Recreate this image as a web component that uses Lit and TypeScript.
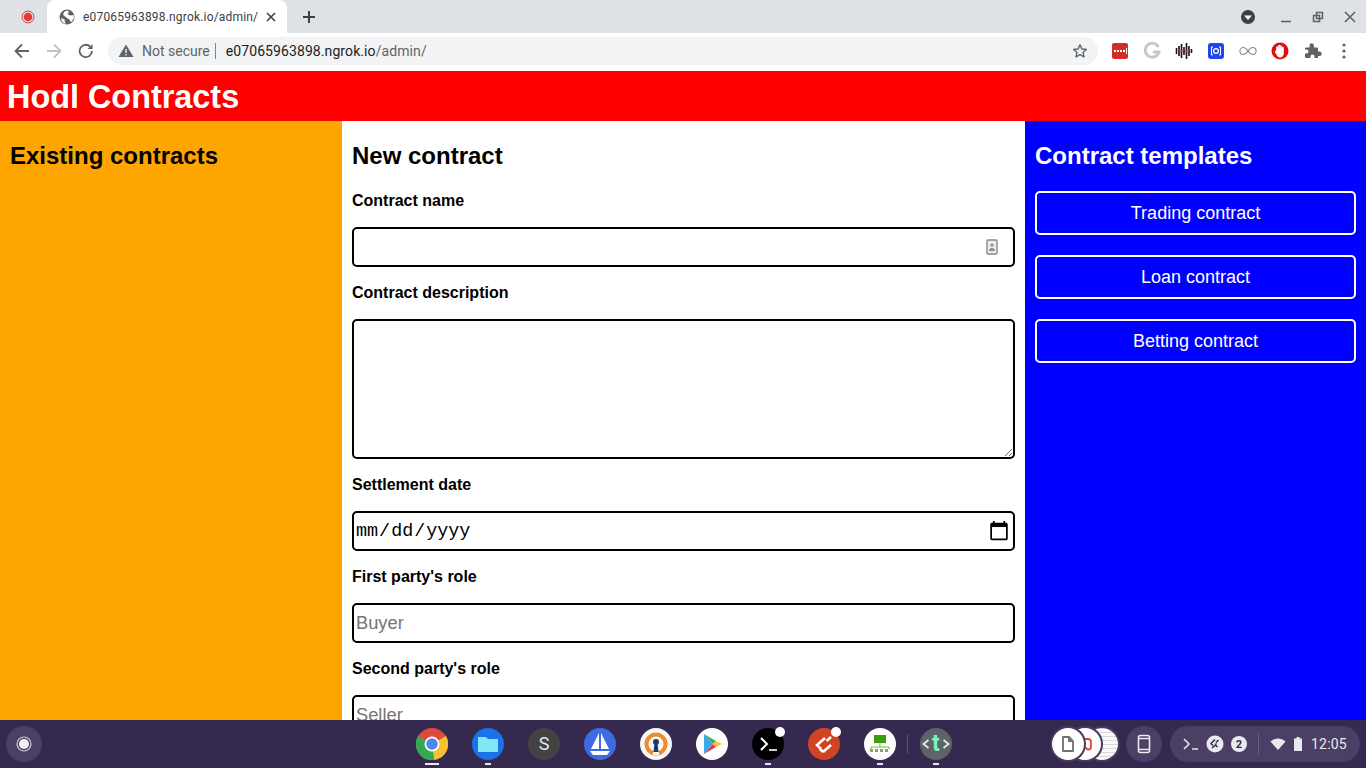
import { LitElement, html, css, svg } from "lit";
import { customElement } from "lit/decorators.js";

const ext = [
  svg`<rect x="2" y="2" width="16" height="16" rx="2" fill="#d32d27"/><path d="M4 9h2v2H4zM7 9h2v2H7zM10 9h2v2h-2zM13 9h2v2h-2z" fill="#fff"/><rect x="16" y="7" width="1" height="6" fill="#fff"/>`,
  svg`<path d="M16.500 6A7 7 0 1 0 17 11H11" fill="none" stroke="#c6c6c6" stroke-width="2.800"/>`,
  svg`<path d="M2.500 7v6M5 5v10M7.500 3v14M10 6v8M12.500 2v16M15 5v10M17.500 8v4" stroke="#111" stroke-width="1.600"/><path d="M5 8v4M7.500 8v4M12.500 8v4" stroke="#8a2a2a" stroke-width="1.600"/>`,
  svg`<rect x="2" y="2" width="16" height="16" rx="3" fill="#1f45f0"/><circle cx="10" cy="10" r="2.400" fill="none" stroke="#fff" stroke-width="1.200"/><path d="M7 6H5.500v8H7M13 6h1.500v8H13" fill="none" stroke="#fff"/>`,
  svg`<path d="M10 10c-2-3-3.200-3.500-4.600-3.500a3.500 3.500 0 0 0 0 7C6.800 13.500 8 13 10 10c2-3 3.200-3.500 4.600-3.500a3.500 3.500 0 0 1 0 7C13.200 13.500 12 13 10 10z" fill="none" stroke="#8a8a8a" stroke-width="1.100"/>`,
  svg`<circle cx="10" cy="10" r="8.500" fill="#e00d0d"/><path d="M6.200 10.500V6a1 1 0 0 1 1.900 0V4.500a1 1 0 0 1 1.900 0V5a1 1 0 0 1 1.900 0v1.500a1 1 0 0 1 1.900 0v6c0 2.300-1.400 4-3.500 4-1.700 0-2.700-.9-3.500-2.300l-1.900-3.200c-.5-1 .9-1.600 1.500-.9z" fill="#fff"/>`,
  svg`<path d="M3 8.500a1 1 0 0 1 1-1h3.500V5.500a2.200 2.200 0 0 1 4.400 0v2H15a1 1 0 0 1 1 1v3h1.500a2.200 2.200 0 0 1 0 4.400H16V18H12.500v-1.500a2 2 0 0 0-4 0V18H4a1 1 0 0 1-1-1v-3.500h1.500a2 2 0 0 0 0-4H3z" fill="#5f6368" transform="translate(0 -1)"/>`,
  svg`<circle cx="10" cy="4" r="1.600" fill="#5f6368"/><circle cx="10" cy="10" r="1.600" fill="#5f6368"/><circle cx="10" cy="16" r="1.600" fill="#5f6368"/>`,
];

const apps = [
  { dot: false, bar: 14, icon: svg`<circle cx="16" cy="16" r="16" fill="#e04a3a"/><path d="M16 16 30 8a16 16 0 0 1-12 24z" fill="#fbc02d"/><path d="M16 16 18 32A16 16 0 0 1 2 8z" fill="#34a853"/><circle cx="16" cy="16" r="7.500" fill="#fff"/><circle cx="16" cy="16" r="5.800" fill="#4f86ec"/>` },
  { dot: false, bar: 6, icon: svg`<circle cx="16" cy="16" r="16" fill="#1a73e8"/><path d="M6 9h8l2 2h10v13H6z" fill="#80e6f5"/>` },
  { dot: false, bar: 0, icon: svg`<circle cx="16" cy="16" r="16" fill="#424242"/><text x="16" y="22" text-anchor="middle" font-size="18" fill="#e6e6e6" font-family="Roboto, sans-serif">S</text>` },
  { dot: false, bar: 0, icon: svg`<circle cx="16" cy="16" r="16" fill="#3d6ce0"/><path d="M15 5v16H7zM17 5l8 16h-8zM6 23h20l-3 4H9z" fill="#fff"/>` },
  { dot: false, bar: 0, icon: svg`<circle cx="16" cy="16" r="16" fill="#f8f8f8"/><circle cx="16" cy="16" r="9.500" fill="none" stroke="#f08a2c" stroke-width="4"/><circle cx="16" cy="14" r="3" fill="#1c3a66"/><path d="M14.500 15h3l1 9h-5z" fill="#1c3a66"/><rect x="13" y="24" width="6" height="3" fill="#f8f8f8"/>` },
  { dot: false, bar: 0, icon: svg`<circle cx="16" cy="16" r="16" fill="#fff"/><path d="M8 6 17 16 8 26z" fill="#3ba9e8"/><path d="M8 6 20 13 17 16z" fill="#36b36a"/><path d="M8 26 20 19 17 16z" fill="#e8344a"/><path d="M20 13 26 16 20 19 17 16z" fill="#fbc02d"/>` },
  { dot: true, bar: 6, icon: svg`<circle cx="16" cy="16" r="16" fill="#000"/><path d="m9 10 6 6-6 6" fill="none" stroke="#fff" stroke-width="2"/><path d="M17 22h8" stroke="#fff" stroke-width="1.600"/>` },
  { dot: true, bar: 0, icon: svg`<circle cx="16" cy="16" r="16" fill="#d04423"/><path d="m17 10-8 7 4 4M23 9l-4.500 4M15 24l8-7M15 24l-3-3" fill="none" stroke="#fff" stroke-width="2.600"/>` },
  { dot: false, bar: 6, icon: svg`<circle cx="16" cy="16" r="16" fill="#fff"/><rect x="10" y="7" width="12" height="8" fill="#3f9c0c"/><path d="M16 15v4M7 21v-2h18v2" fill="none" stroke="#7cae5a"/><path d="M6 21h3v3H6zM11 21h3v3h-3zM16 21h3v3h-3zM21 21h3v3h-3z" fill="#7cae5a"/>` },
  { dot: false, bar: 6, sep: true, icon: svg`<circle cx="16" cy="16" r="16" fill="#5f6368"/><text x="16" y="23" text-anchor="middle" font-size="23" font-weight="bold" fill="#7df0c0" font-family="Roboto, sans-serif">t</text><path d="M8.500 12 3.500 16 8.500 20M23.500 12l5 4-5 4" fill="none" stroke="#e8e8e8" stroke-width="1.800"/>` },
];

@customElement("app-root")
export class AppRoot extends LitElement {
  static styles = css`
    :host { display: flex; flex-direction: column; width: 1366px; height: 768px; overflow: hidden; font-family: "Liberation Sans", Arial, sans-serif; }
    svg { display: block; flex: none; }

    .tabs { height: 33px; flex: none; background: #dee1e6; display: flex; align-items: flex-end; font-family: Roboto, sans-serif; }
    .pinned { width: 47px; height: 33px; display: flex; align-items: center; justify-content: center; padding-left: 8px; box-sizing: border-box; }
    .tab { width: 240px; height: 33px; background: #fff; border-radius: 8px 8px 0 0; display: flex; align-items: center; box-sizing: border-box; padding: 0 11px 0 12px; color: #3c4043; font-size: 12px; letter-spacing: 0.18px; }
    .tab span { flex: 1; margin-left: 8px; white-space: nowrap; }
    .plus { margin-left: 14px; align-self: center; }
    .win { margin-left: auto; display: flex; align-items: center; align-self: center; gap: 16px; padding-right: 8px; }
    .win .drop { margin-right: 6px; }

    .bar { height: 38px; flex: none; background: #fff; display: flex; align-items: center; padding: 0 0 2px 12px; box-sizing: border-box; font-family: Roboto, sans-serif; }
    .nav { display: flex; gap: 12px; }
    .omni { width: 990px; height: 28px; margin-left: 12px; border-radius: 14px; background: #f1f3f4; display: flex; align-items: center; padding: 0 10px; box-sizing: border-box; font-size: 14px; }
    .omni .warn { margin-right: 8px; }
    .ns { color: #5f6368; padding-right: 5px; border-right: 1px solid #80868b; line-height: 16px; }
    .url { color: #202124; margin-left: 10px; flex: 1; letter-spacing: 0.09px; }
    .url i { font-style: normal; color: #5f6368; }
    .exts { display: flex; gap: 12px; margin-left: 12px; }

    .page { flex: 1; min-height: 0; overflow: hidden; }
    header { height: 50px; box-sizing: border-box; padding: 2px 0 0 7px; background: #f00; color: #fff; display: flex; align-items: center; }
    h1 { margin: 0; font-size: 32.4px; font-weight: bold; }
    .cols { display: grid; grid-template-columns: 342px 683px 341px; height: 640px; }
    .col { padding: 10px; box-sizing: border-box; }
    .a { background: orange; color: #000; }
    .b { background: #fff; color: #000; }
    .c { background: #00f; color: #fff; }
    h2 { margin: 10px 0 0; font-size: 24px; line-height: 30px; font-weight: bold; }
    .form { display: flex; flex-direction: column; margin-top: 12px; }
    label { display: block; font-size: 16px; font-weight: bold; line-height: 18px; margin: 9px 0 17px; }
    .field { position: relative; margin-bottom: 8px; }
    input, textarea { display: block; width: 100%; height: 40px; box-sizing: border-box; border: 2px solid #000; border-radius: 5px; padding: 2px; background: #fff; font-family: "Liberation Sans", Arial, sans-serif; font-size: 18.3px; outline: none; margin: 0; }
    textarea { height: 140px; }
    input[type="date"] { font-family: "Liberation Mono", monospace; font-size: 18.4px; color: #000; padding-left: 1px; }
    input[type="date"]::-webkit-calendar-picker-indicator { width: 22px; height: 22px; padding: 0; margin: 0 1px 0 0; }
    input::placeholder { color: #757575; }
    .auto { position: absolute; right: 17px; top: 12px; }
    .tpl { display: flex; flex-direction: column; gap: 20px; margin-top: 20px; }
    button { height: 44px; background: #00f; color: #fff; border: 2px solid #fff; border-radius: 5px; font-family: "Liberation Sans", Arial, sans-serif; font-size: 18px; padding: 0; }

    .shelf { height: 48px; flex: none; background: #35294f; display: flex; align-items: center; font-family: Roboto, sans-serif; color: #e8eaed; position: relative; }
    .launcher { width: 36px; height: 36px; margin-left: 6px; border-radius: 50%; background: #4b3f65; display: flex; align-items: center; justify-content: center; }
    .apps { display: flex; align-items: center; margin-left: 374px; gap: 24px; }
    .app { position: relative; width: 32px; height: 32px; }
    .app .d { position: absolute; right: -1px; top: -1px; width: 10px; height: 10px; border-radius: 50%; background: #fff; }
    .app .u { position: absolute; left: 50%; bottom: -5px; height: 2px; transform: translateX(-50%); background: #e8eaed; }
    .sep { width: 1px; height: 20px; background: #5c5175; margin: 0 -12px 0 -13px; }
    .holds { margin-left: auto; display: flex; align-items: center; }
    .stack { display: flex; width: 66px; height: 36px; margin-right: 8px; align-items: center; }
    .stack div { width: 32px; height: 32px; border-radius: 50%; background: #fff; margin-right: -15px; display: flex; align-items: center; justify-content: center; flex: none; box-shadow: 0 0 0 2px #453a60; }
    .stack .img { background: repeating-linear-gradient(0deg, #fbf8f5 0 3px, #d4d8df 3px 4px); }
    .stack .first { position: relative; z-index: 2; }
    .stack .mid { position: relative; z-index: 1; padding-left: 6px; box-sizing: border-box; }
    .phone { width: 36px; height: 36px; border-radius: 50%; background: #4b3f65; display: flex; align-items: center; justify-content: center; margin-right: 8px; }
    .tray { height: 36px; width: 190px; margin-right: 6px; border-radius: 18px; background: #4b3f65; display: flex; align-items: center; padding-left: 13px; box-sizing: border-box; font-size: 14px; letter-spacing: 0.2px; }
    .num { width: 16px; height: 16px; border-radius: 50%; background: #e8eaed; color: #35294f; font-size: 11px; font-weight: 700; display: flex; align-items: center; justify-content: center; margin-left: 7px; letter-spacing: 0; }
    .remote { margin-left: 7px; }
    .rsep { width: 1px; height: 20px; background: #6a5f82; margin: 0 11px; }
    .batt { margin-left: 7px; }
    .time { margin-left: 8px; }
  `;

  private field(label: string, type: string, placeholder = "") {
    return html`<label>${label}</label>
      <div class="field"><input type=${type} placeholder=${placeholder} /></div>`;
  }

  render() {
    return html`
      <div class="tabs">
        <div class="pinned">
          <svg width="14" height="14" viewBox="0 0 14 14"><circle cx="7" cy="7" r="6" fill="none" stroke="#e53935"/><circle cx="7" cy="7" r="4.300" fill="#e53935"/></svg>
        </div>
        <div class="tab">
          <svg width="16" height="16" viewBox="0 0 16 16"><circle cx="8" cy="8" r="7.500" fill="#5f6368"/><path d="M8.500 1.500 10 3 8.500 5 11 6.500 14.500 6 15 9l-3 4.500-1.500-3L8 9 5.500 7 4 5.500 5.500 2.500zM2 9l3.500 1.500.5 2.500.5 2A7 7 0 0 1 2 9z" fill="#fff"/></svg>
          <span>e07065963898.ngrok.io/admin/</span>
          <svg width="10" height="10" viewBox="0 0 10 10"><path d="m1 1 8 8M9 1 1 9" stroke="#3c4043" stroke-width="1.600"/></svg>
        </div>
        <svg class="plus" width="16" height="16" viewBox="0 0 16 16"><path d="M8 2v12M2 8h12" stroke="#3c4043" stroke-width="2"/></svg>
        <div class="win">
          <svg class="drop" width="16" height="16" viewBox="0 0 16 16"><circle cx="8" cy="8" r="7" fill="#3c4043"/><path d="M4 6.500h8L8 11z" fill="#fff"/></svg>
          <svg width="16" height="16" viewBox="0 0 16 16"><path d="M3 12.500h10" stroke="#5f6368" stroke-width="1.600"/></svg>
          <svg width="16" height="16" viewBox="0 0 16 16"><path d="M6.500 3.500h6v6h-6zM3.500 6.500h6v6h-6z" fill="#dee1e6" stroke="#5f6368" stroke-width="1.500"/></svg>
          <svg width="16" height="16" viewBox="0 0 16 16"><path d="m3 3 10 10M13 3 3 13" stroke="#5f6368" stroke-width="1.600"/></svg>
        </div>
      </div>
      <div class="bar">
        <div class="nav">
          <svg width="20" height="20" viewBox="0 0 20 20"><path d="M17 10H4M10 3.500 3.500 10l6.500 6.500" fill="none" stroke="#5f6368" stroke-width="1.800"/></svg>
          <svg width="20" height="20" viewBox="0 0 20 20"><path d="M3 10h13M10 3.500l6.500 6.500-6.500 6.500" fill="none" stroke="#bdc1c6" stroke-width="1.800"/></svg>
          <svg width="20" height="20" viewBox="0 0 20 20"><path d="M16 10a6.200 6.200 0 1 1-1.800-4.400" fill="none" stroke="#5f6368" stroke-width="1.800"/><path d="M16.500 3v5h-5z" fill="#5f6368"/></svg>
        </div>
        <div class="omni">
          <svg class="warn" width="16" height="16" viewBox="0 0 16 16"><path d="M8 1.500 15.500 14H.5z" fill="#5f6368"/><path d="M7.300 6h1.400v4H7.300zM7.300 11h1.400v1.400H7.300z" fill="#f1f3f4"/></svg>
          <span class="ns">Not secure</span>
          <span class="url">e07065963898.ngrok.io<i>/admin/</i></span>
          <svg width="16" height="16" viewBox="0 0 16 16"><path d="m8 1.800 1.900 4.200 4.500.5-3.400 3 1 4.500L8 11.700 4 14l1-4.500-3.400-3 4.500-.5z" fill="none" stroke="#5f6368" stroke-width="1.400" stroke-linejoin="round"/></svg>
        </div>
        <div class="exts">
          ${ext.map((e) => html`<svg width="20" height="20" viewBox="0 0 20 20">${e}</svg>`)}
        </div>
      </div>

      <div class="page">
        <header><h1>Hodl Contracts</h1></header>
        <div class="cols">
          <section class="col a"><h2>Existing contracts</h2></section>
          <section class="col b">
            <h2>New contract</h2>
            <div class="form">
              <label>Contract name</label>
              <div class="field">
                <input type="text" />
                <svg class="auto" width="12" height="16" viewBox="0 0 12 16"><rect x="1" y="1" width="10" height="14" rx="1" fill="#ececec" stroke="#8a8a8a" stroke-width="1.400"/><circle cx="6" cy="6" r="1.500" fill="#8a8a8a"/><path d="M3 12c0-4 6-4 6 0z" fill="#8a8a8a"/></svg>
              </div>
              <label>Contract description</label>
              <div class="field"><textarea></textarea></div>
              ${this.field("Settlement date", "date")}
              ${this.field("First party's role", "text", "Buyer")}
              ${this.field("Second party's role", "text", "Seller")}
            </div>
          </section>
          <section class="col c">
            <h2>Contract templates</h2>
            <div class="tpl">
              <button>Trading contract</button>
              <button>Loan contract</button>
              <button>Betting contract</button>
            </div>
          </section>
        </div>
      </div>

      <div class="shelf">
        <div class="launcher">
          <svg width="16" height="16" viewBox="0 0 16 16"><circle cx="8" cy="8" r="7" fill="none" stroke="#cfcdd8" stroke-width="1.200"/><circle cx="8" cy="8" r="5" fill="#f1f3f4"/></svg>
        </div>
        <div class="apps">
          ${apps.map((a) => html`
            ${a.sep ? html`<div class="sep"></div>` : ""}
            <div class="app">
              <svg width="32" height="32" viewBox="0 0 32 32">${a.icon}</svg>
              ${a.dot ? html`<div class="d"></div>` : ""}
              ${a.bar ? html`<div class="u" style="width:${a.bar}px"></div>` : ""}
            </div>`)}
        </div>
        <div class="holds">
          <div class="stack">
            <div class="first"><svg width="14" height="16" viewBox="0 0 14 16"><path d="M2 1h6l4 4v10H2zM8 1v4h4" fill="none" stroke="#6f6f6f" stroke-width="1.800"/></svg></div>
            <div class="mid"><svg width="14" height="16" viewBox="0 0 14 16"><path d="M2 3h5a3 3 0 0 1 3 3v5a2.500 2.500 0 0 1-5 0" fill="none" stroke="#ea4335" stroke-width="1.800"/></svg></div>
            <div class="img"></div>
          </div>
          <div class="phone">
            <svg width="16" height="20" viewBox="0 0 16 20"><rect x="2.500" y="1.500" width="11" height="17" rx="2" fill="none" stroke="#e8eaed" stroke-width="1.600"/><path d="M3 4.500h10M3 15.500h10" stroke="#e8eaed" stroke-width="1.600"/></svg>
          </div>
          <div class="tray">
            <svg width="16" height="16" viewBox="0 0 16 16"><path d="m1 3 5 5-5 5" fill="none" stroke="#e8eaed" stroke-width="1.500"/><path d="M9 13h6" stroke="#e8eaed" stroke-width="1.500"/></svg>
            <svg class="remote" width="18" height="18" viewBox="0 0 18 18"><circle cx="9" cy="9" r="8.500" fill="#e8eaed"/><path d="M9 4.500 5 8.500l2 2M12.500 5 10 7.500M10.500 8.500l-1 1M6 13l3.500-3 2 2" fill="none" stroke="#35294f" stroke-width="1.500"/></svg>
            <span class="num">2</span>
            <span class="rsep"></span>
            <svg width="16" height="16" viewBox="0 0 16 16"><path d="M.5 5.500C5 1.500 11 1.500 15.500 5.500L8 14z" fill="#e8eaed"/></svg>
            <svg class="batt" width="10" height="16" viewBox="0 0 10 16"><path d="M3.500 1h3v1.500H9V15H1V2.500h2.500z" fill="#e8eaed"/></svg>
            <span class="time">12:05</span>
          </div>
        </div>
      </div>
    `;
  }
}
